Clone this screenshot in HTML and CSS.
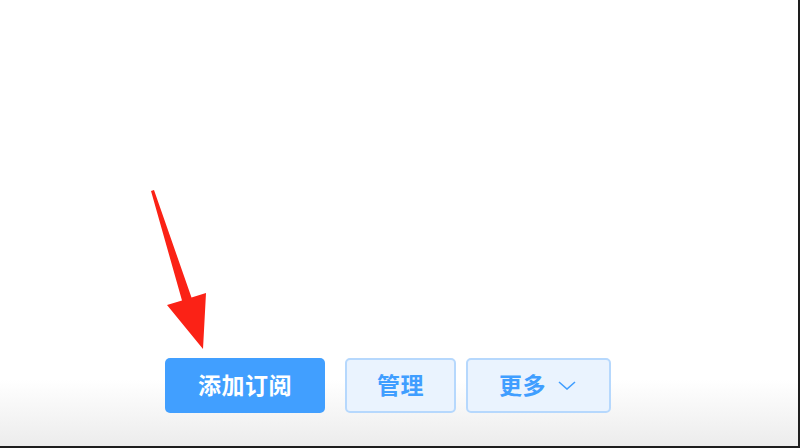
FILE: index.html
```html
<!DOCTYPE html>
<html lang="zh-CN">
<head>
    <meta charset="UTF-8">
    <meta name="viewport" content="width=device-width, initial-scale=1.0">
    <title>订阅</title>
    <link rel="stylesheet" href="styles.css">
</head>
<body>
    <div class="window">
        <!-- red callout pointing at the primary button -->
        <svg class="callout" width="800" height="448" viewBox="0 0 800 448">
            <polygon points="151,191 154,190 191.5,297.5 206,293 203,349 167,305 182,300.5" fill="#fb2216"/>
        </svg>

        <div class="toolbar">
            <button class="btn btn-primary">添加订阅</button>
            <button class="btn btn-plain btn-manage">管理</button>
            <button class="btn btn-plain btn-more">
                更多
                <svg class="chevron" width="18" height="9" viewBox="0 0 18 9">
                    <polyline points="1,1 9,8 17,1" fill="none" stroke="#409eff" stroke-width="1.6"/>
                </svg>
            </button>
        </div>
    </div>
</body>
</html>
```

FILE: styles.css
```css
* { margin: 0; padding: 0; box-sizing: border-box; }
body {
    font-family: "Noto Sans CJK SC", "Noto Sans", sans-serif;
    background: #fff;
}
.window {
    position: relative;
    width: 800px;
    height: 448px;
    border-right: 2px solid #1e1e1e;
    border-bottom: 2px solid #1e1e1e;
    background: linear-gradient(180deg, #fff 0, #fff 380px, #ececec 446px);
    display: flex;
    flex-direction: column;
    justify-content: flex-end;
    padding: 0 0 33px 165px;
}
.callout {
    position: absolute;
    top: 0;
    left: 0;
}
.toolbar {
    display: flex;
    gap: 10px;
}
.btn {
    height: 55px;
    border-radius: 5px;
    font-family: inherit;
    font-size: 23px;
    font-weight: 700;
    line-height: 1;
    padding-bottom: 3px;
    letter-spacing: 0.5px;
    display: flex;
    align-items: center;
    justify-content: center;
    cursor: pointer;
}
.btn-primary {
    width: 160px;
    margin-right: 10px;
    background: #419fff;
    border: none;
    color: #fff;
}
.btn-plain {
    background: #eaf3fe;
    border: 2px solid #b6d8fd;
    color: #409eff;
}
.btn-manage {
    width: 111px;
}
.btn-more {
    width: 145px;
    gap: 12px;
    padding-right: 2px;
}
.chevron {
    margin-top: 3px;
}
```
